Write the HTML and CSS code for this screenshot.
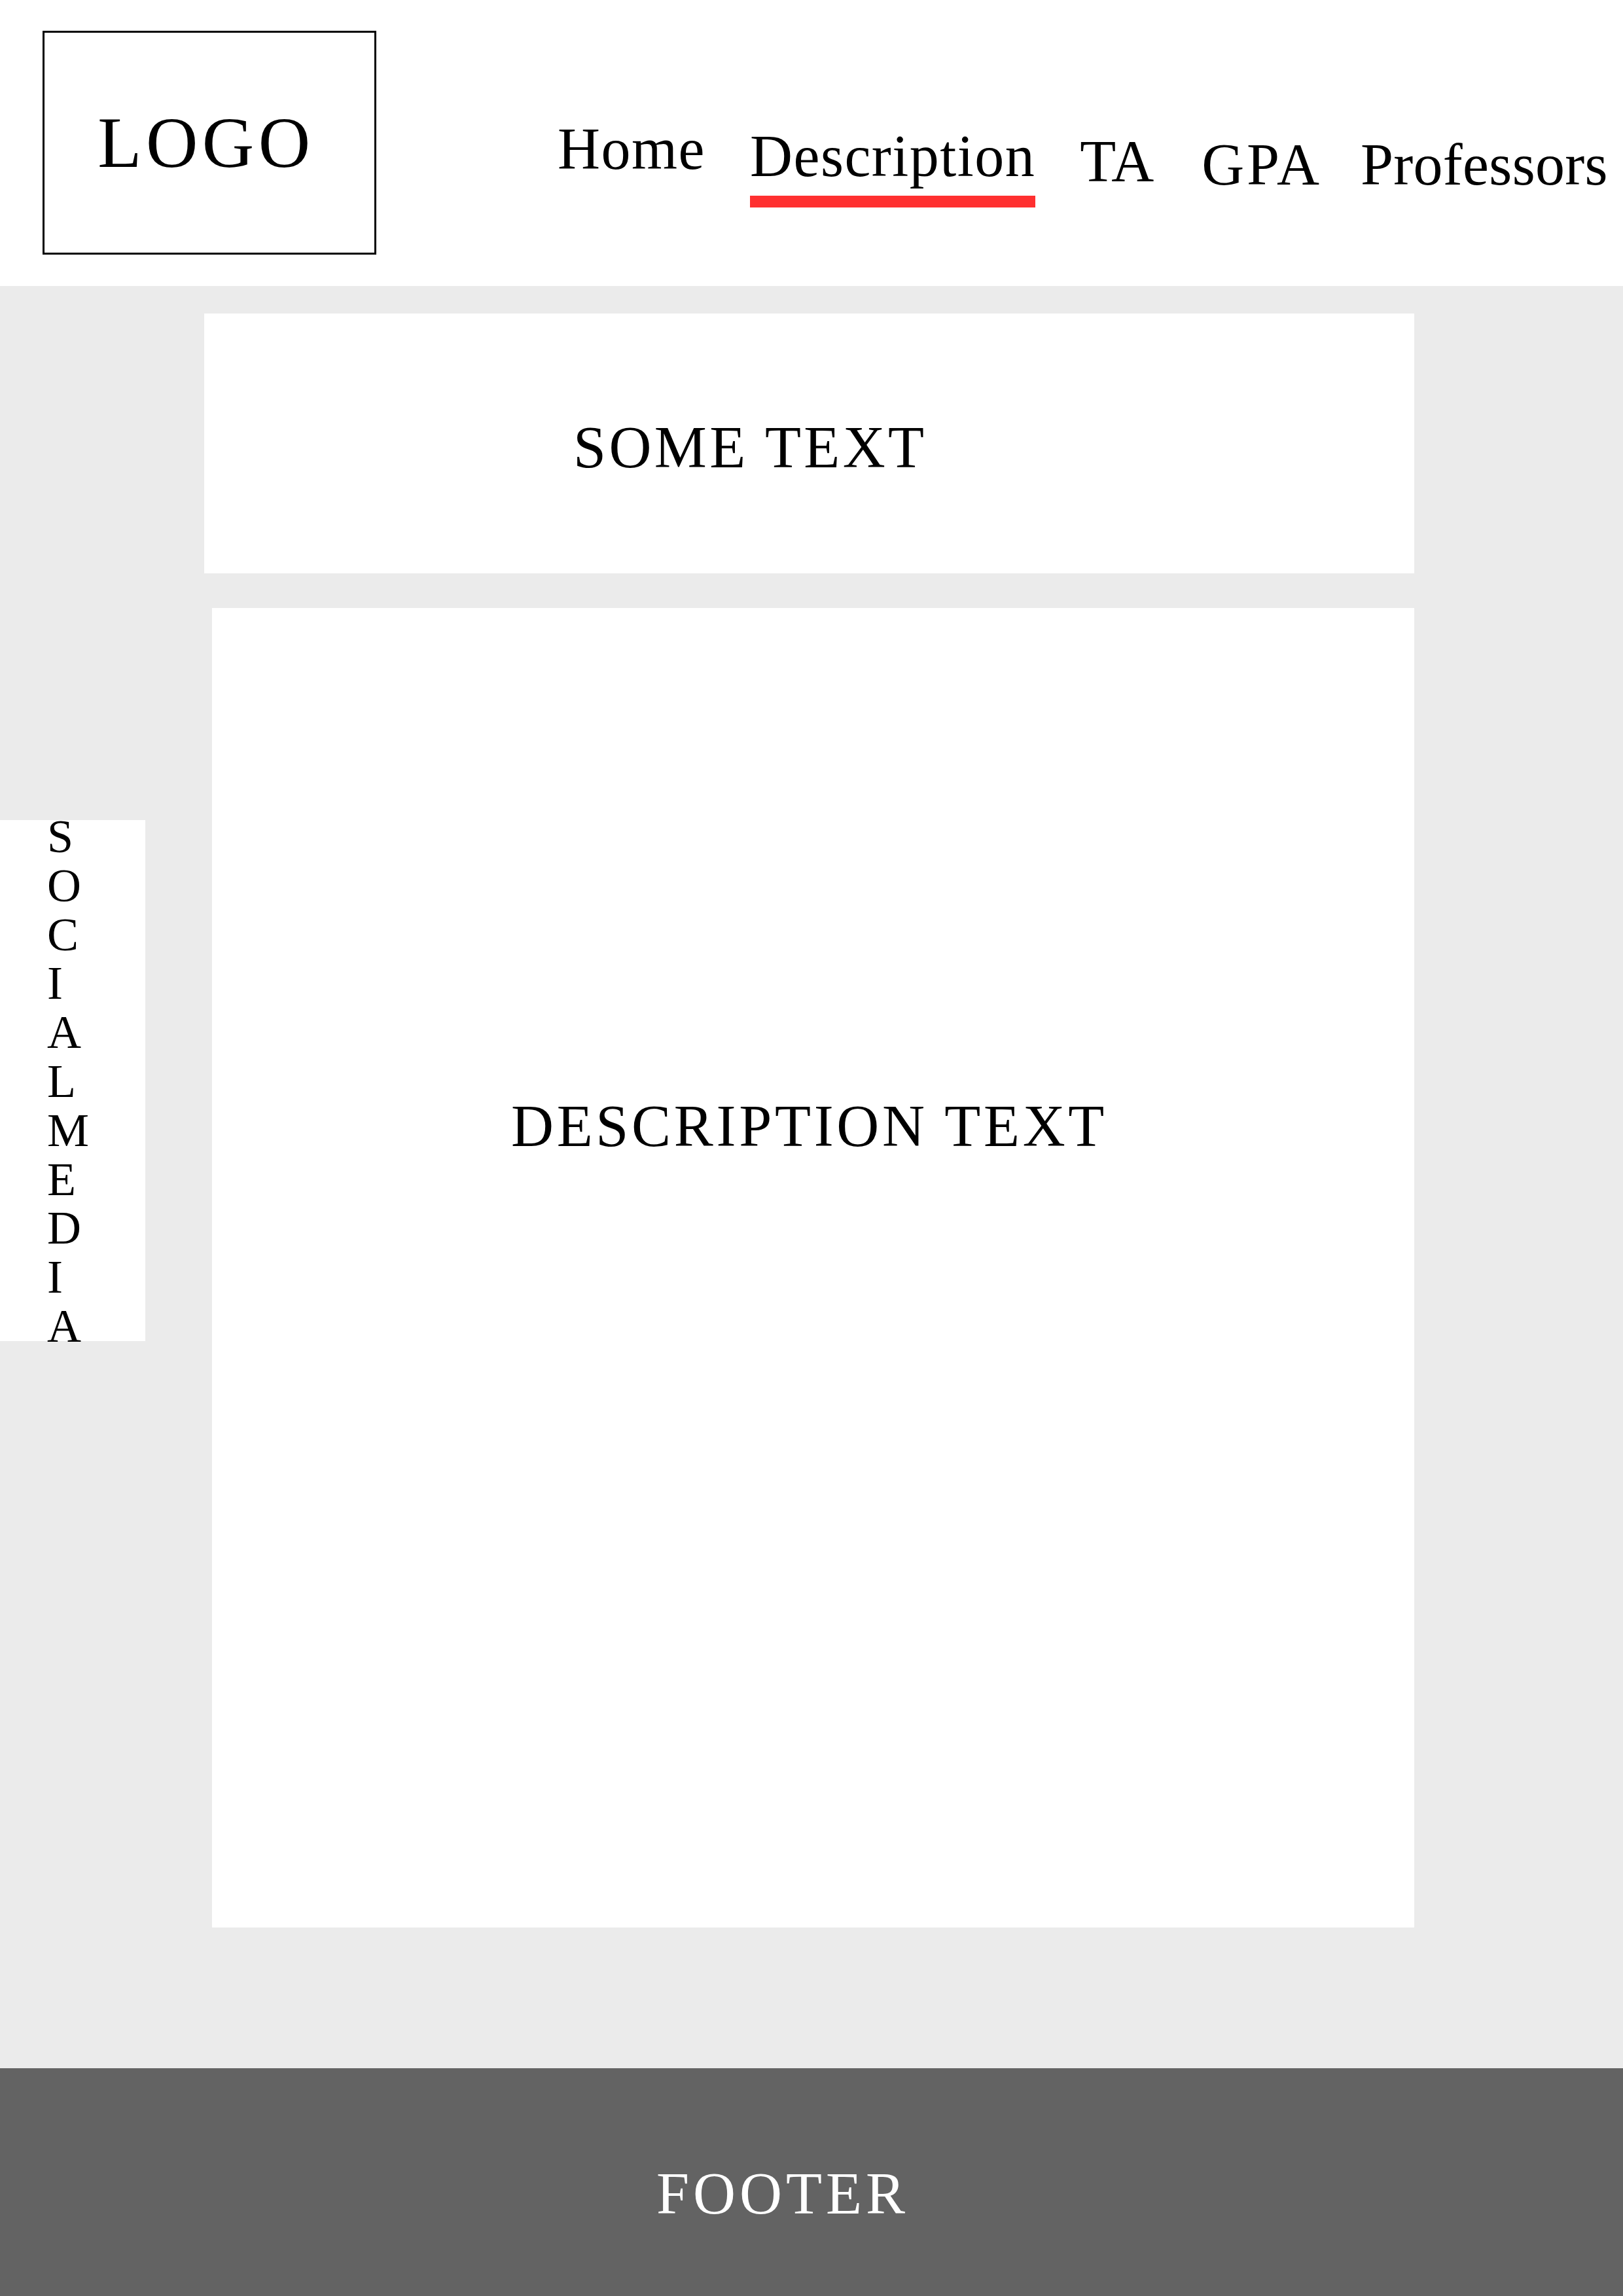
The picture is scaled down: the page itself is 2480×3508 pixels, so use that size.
FILE: index.html
```html
<!DOCTYPE html>
<html lang="en">
<head>
<meta charset="utf-8">
<title>Description</title>
<link rel="stylesheet" href="styles.css">
</head>
<body>
<header class="site-header">
  <div class="logo">LOGO</div>
  <nav class="nav">
    <a class="nav-item nav-home" href="#">Home</a>
    <a class="nav-item nav-desc is-active" href="#">Description</a>
    <a class="nav-item nav-ta" href="#">TA</a>
    <a class="nav-item nav-gpa" href="#">GPA</a>
    <a class="nav-item nav-prof" href="#">Professors</a>
  </nav>
</header>
<main class="main">
  <aside class="social">
    <div class="social-text">SOCIALMEDIA</div>
  </aside>
  <div class="content">
    <section class="card card-intro">SOME TEXT</section>
    <section class="card card-desc">DESCRIPTION TEXT</section>
  </div>
</main>
<footer class="footer">FOOTER</footer>
</body>
</html>
```

FILE: styles.css
```css
html, body {
  margin: 0;
  padding: 0;
}
body {
  width: 2480px;
  font-family: "Liberation Serif", "Times New Roman", serif;
  color: #000;
  background: #fff;
}

/* Header */
.site-header {
  height: 437px;
  display: flex;
  align-items: flex-start;
  background: #fff;
}
.logo {
  box-sizing: border-box;
  margin: 47px 0 0 65px;
  width: 510px;
  height: 342px;
  border: 3px solid #000;
  display: flex;
  align-items: center;
  justify-content: center;
  padding-right: 10px;
  font-size: 110px;
  line-height: 110px;
  letter-spacing: 6.5px;
}
.nav {
  display: flex;
  align-items: flex-start;
  gap: 68px;
  margin-left: 277px;
  font-size: 90px;
  line-height: 90px;
}
.nav-item {
  color: #000;
  text-decoration: none;
  white-space: nowrap;
}
.nav-home { margin-top: 183px; letter-spacing: 1.5px; }
.nav-desc { margin-top: 194px; letter-spacing: 1.5px; }
.nav-ta { margin-top: 202px; margin-right: 5px; }
.nav-gpa { margin-top: 207px; margin-right: -9px; letter-spacing: 4px; }
.nav-prof { margin-top: 207px; letter-spacing: 0.3px; }
.is-active {
  padding-bottom: 15px;
  border-bottom: 18px solid #ff3030;
}

/* Main */
.main {
  height: 2723px;
  background: #ebebeb;
  display: flex;
  align-items: flex-start;
}
.social {
  box-sizing: border-box;
  display: flow-root;
  flex: 0 0 222px;
  width: 222px;
  height: 796px;
  margin-top: 816px;
  padding-left: 72px;
  background: #fff;
}
.social-text {
  margin-top: -12px;
  width: 1px;
  word-break: break-all;
  font-size: 72px;
  line-height: 74.8px;
}
.content {
  margin-left: 90px;
  padding-top: 42px;
  width: 1849px;
}
.card {
  box-sizing: border-box;
  background: #fff;
  font-size: 90px;
  line-height: 90px;
}
.card-intro {
  height: 397px;
  padding: 160px 0 0 564px;
  letter-spacing: 4.4px;
}
.card-desc {
  width: 1837px;
  height: 2016px;
  margin: 53px 0 0 12px;
  padding: 747px 12px 0 0;
  text-align: center;
  letter-spacing: 4.7px;
}

/* Footer */
.footer {
  box-sizing: border-box;
  height: 348px;
  background: #636363;
  color: #fff;
  text-align: center;
  padding: 147px 88px 0 0;
  font-size: 90px;
  line-height: 90px;
  letter-spacing: 6px;
}
```
